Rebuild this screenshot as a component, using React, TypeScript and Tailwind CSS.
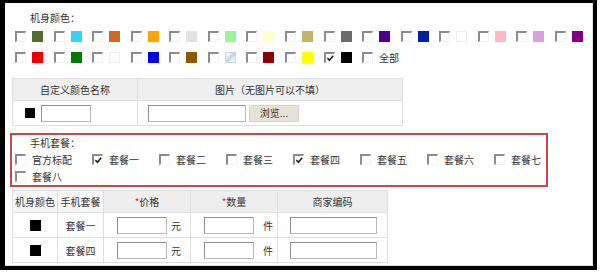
import React from "react";

const row1 = [
  "#556b2f", "#33d4f0", "#d2691e", "#ffa500", "#e2e2e2", "#98f598", "#ffffc6", "#c2b46a",
  "#6b6b6b", "#4b0090", "#00209a", "#ffffff", "#ffb6c1", "#dda0dd", "#800080",
];
const row2 = ["#ee0000", "#007a00", "#ffffff", "#0000ee", "#8b5a00", "pattern", "#8b0000", "#ffff00", "#000000"];

const packs = ["官方标配", "套餐一", "套餐二", "套餐三", "套餐四", "套餐五", "套餐六", "套餐七"];
const packChecked = [false, true, false, false, true, false, false, false];

function Box({ checked }: { checked?: boolean }) {
  return (
    <span className="relative inline-block w-[11px] h-[11px] shrink-0 bg-white border-t-2 border-l-2 border-r border-b border-[#8c8c8c] border-r-[#f2f2f2] border-b-[#f2f2f2]">
      {checked && (
        <svg viewBox="0 0 10 10" className="absolute left-0 top-0 w-[9px] h-[9px]">
          <polyline points="1.5,4.5 3.8,7 8,2" fill="none" stroke="#222" strokeWidth="1.8" />
        </svg>
      )}
    </span>
  );
}

function Swatch({ color }: { color: string }) {
  if (color === "pattern") {
    return (
      <span className="inline-block w-[11px] h-[11px] shrink-0 bg-[#d6e4f4] border border-[#c4d4ea] bg-[linear-gradient(135deg,#eef4fb_25%,#bcd0ea_50%,#eef4fb_75%)]" />
    );
  }
  return <span className="inline-block w-[11px] h-[11px] shrink-0" style={{ backgroundColor: color, border: color === "#ffffff" ? "1px solid #eeeeee" : "none" }} />;
}

function ColorItem({ color, checked }: { color: string; checked?: boolean }) {
  return (
    <div className="w-[38.57px] shrink-0 flex items-center gap-[6px]">
      <Box checked={checked} />
      <Swatch color={color} />
    </div>
  );
}

function TextInput({ w }: { w: string }) {
  return <input className={`${w} h-[17px] bg-white border border-[#b8b8b8] border-t-[#8e8e8e] border-l-[#8e8e8e] outline-none`} />;
}

export default function App() {
  return (
    <div className="w-[600px] h-[278px] bg-white font-['Noto_Sans_CJK_SC',sans-serif] text-[10px] text-[#333]">
      <div className="w-[597px] h-[270px] border-l-[5px] border-t-[3px] border-r-[4px] border-b-[4px] border-black">
        <div className="h-full border-r border-b border-[#e2e2e2]">
          <div className="pl-[25px] pt-[7px] h-[23px] leading-[16px]">机身颜色：</div>

          <div className="flex items-center pl-[10px] h-[20px]">
            {row1.map((c, i) => (
              <ColorItem key={i} color={c} />
            ))}
          </div>
          <div className="flex items-center pl-[10px] h-[22px]">
            {row2.map((c, i) => (
              <ColorItem key={i} color={c} checked={i === 8} />
            ))}
            <div className="flex items-center gap-[6px]">
              <Box />
              <span>全部</span>
            </div>
          </div>

          <table className="ml-[7px] mt-[10px] border-collapse border border-[#dedede]">
            <tbody>
              <tr className="h-[22px] bg-[#efefef]">
                <td className="w-[125px] border border-[#dedede] text-center">自定义颜色名称</td>
                <td className="w-[265px] border border-[#dedede] text-center">图片（无图片可以不填）</td>
              </tr>
              <tr className="h-[25px]">
                <td className="border border-[#dedede]">
                  <div className="flex items-center pl-[12px] gap-[6px]">
                    <span className="w-[10px] h-[10px] bg-black" />
                    <TextInput w="w-[50px]" />
                  </div>
                </td>
                <td className="border border-[#dedede]">
                  <div className="flex items-center pl-[10px] gap-[3px]">
                    <TextInput w="w-[98px]" />
                    <button className="w-[50px] h-[17px] bg-[#e6e2da] border border-[#d6d2ca] text-[10px] text-[#333] leading-none">
                      浏览...
                    </button>
                  </div>
                </td>
              </tr>
            </tbody>
          </table>

          <div className="ml-[5px] mt-[7px] w-[538px] h-[54px] border-2 border-[#c8484c]">
            <div className="pl-[18px] pt-[1px] h-[15px] leading-[14px]">手机套餐：</div>
            <div className="flex items-center gap-[20px] pl-[3px] h-[18px]">
              {packs.map((p, i) => (
                <div key={p} className="flex items-center gap-[6px]">
                  <Box checked={packChecked[i]} />
                  <span>{p}</span>
                </div>
              ))}
            </div>
            <div className="flex items-center gap-[6px] pl-[3px] h-[17px]">
              <Box />
              <span>套餐八</span>
            </div>
          </div>

          <table className="ml-[7px] mt-[3px] border-collapse border border-[#dedede]">
            <tbody>
              <tr className="h-[22px]">
                <td className="w-[45px] border border-[#dedede] bg-[#f6f6f6] text-center">机身颜色</td>
                <td className="w-[46px] border border-[#dedede] bg-[#f6f6f6] text-center">手机套餐</td>
                <td className="w-[87px] border border-[#dedede] bg-[#eeeeee] text-center">
                  <span className="text-[#d22]">*</span>价格
                </td>
                <td className="w-[87px] border border-[#dedede] bg-[#eeeeee] text-center">
                  <span className="text-[#d22]">*</span>数量
                </td>
                <td className="w-[110px] border border-[#dedede] bg-[#eeeeee] text-center">商家编码</td>
              </tr>
              {["套餐一", "套餐四"].map((p) => (
                <tr key={p} className="h-[25px]">
                  <td className="border border-[#dedede]">
                    <div className="flex justify-center">
                      <span className="w-[11px] h-[11px] bg-black" />
                    </div>
                  </td>
                  <td className="border border-[#dedede] text-center">{p}</td>
                  <td className="border border-[#dedede]">
                    <div className="flex items-center pl-[13px] gap-[4px]">
                      <TextInput w="w-[50px]" />
                      <span>元</span>
                    </div>
                  </td>
                  <td className="border border-[#dedede]">
                    <div className="flex items-center pl-[13px] gap-[9px]">
                      <TextInput w="w-[50px]" />
                      <span>件</span>
                    </div>
                  </td>
                  <td className="border border-[#dedede]">
                    <div className="flex items-center pl-[12px]">
                      <TextInput w="w-[87px]" />
                    </div>
                  </td>
                </tr>
              ))}
            </tbody>
          </table>
        </div>
      </div>
    </div>
  );
}
